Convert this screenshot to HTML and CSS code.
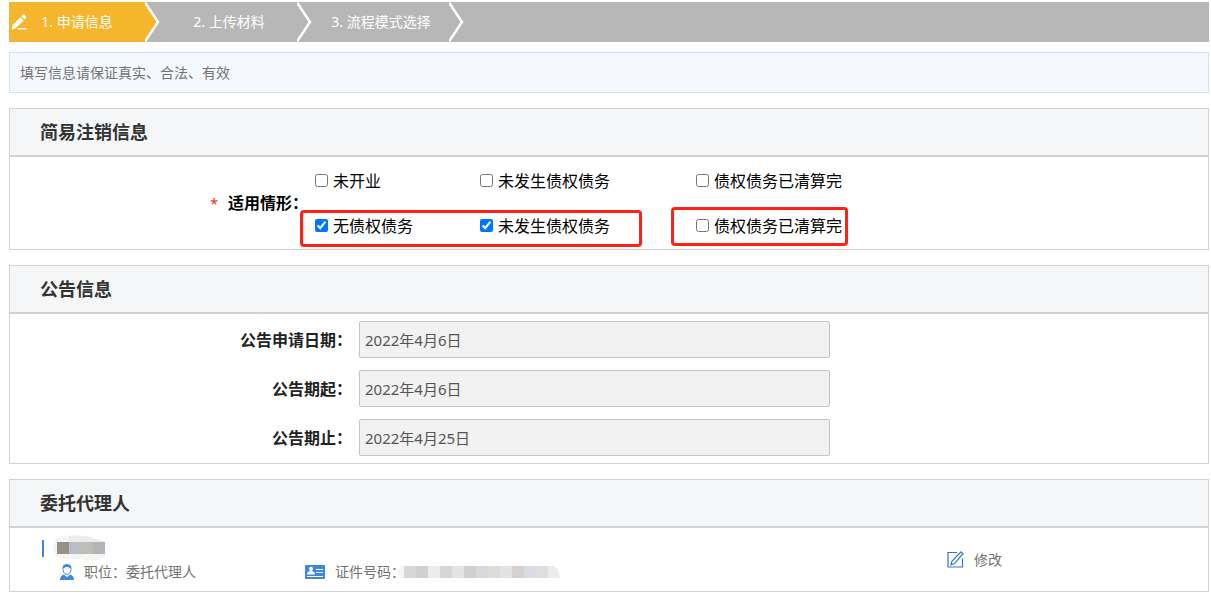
FILE: index.html
```html
<!DOCTYPE html>
<html lang="zh-CN">

<head>
  <meta charset="UTF-8">
  <meta name="viewport" content="width=device-width, initial-scale=1.0">
  <title>简易注销</title>
  <link rel="stylesheet" href="styles.css">
</head>

<body>
  <ol class="steps">
    <li class="step active">
      <svg class="step-icon" width="16" height="16" viewBox="0 0 16 16" fill="#fff">
        <path d="M0.5 15.5l1.2-4.6 7.7-7.7 3.2 3.2-7.9 7.8z" />
        <path d="M10.3 2.3l1.5-1.5q.8-.8 1.700 0l1.500 1.500q.8.8 0 1.600l-1.500 1.500z" />
        <path d="M7.500 14h8v1.600h-9.200z" />
      </svg>
      <span class="step-text">1. 申请信息</span>
      <svg class="step-arrow" width="16" height="40" viewBox="0 0 16 40">
        <path class="step-fill" d="M0 0L13 20L0 40z" />
        <path d="M-1 -1L13 20L-1 41" fill="none" stroke="#fff" stroke-width="2.500" />
      </svg>
    </li>
    <li class="step">
      <span class="step-text">2. 上传材料</span>
      <svg class="step-arrow" width="16" height="40" viewBox="0 0 16 40">
        <path d="M-1 -1L13 20L-1 41" fill="none" stroke="#fff" stroke-width="2.500" />
      </svg>
    </li>
    <li class="step">
      <span class="step-text">3. 流程模式选择</span>
      <svg class="step-arrow" width="16" height="40" viewBox="0 0 16 40">
        <path d="M-1 -1L13 20L-1 41" fill="none" stroke="#fff" stroke-width="2.500" />
      </svg>
    </li>
  </ol>

  <p class="notice">填写信息请保证真实、合法、有效</p>

  <section class="panel">
    <h2 class="panel-title">简易注销信息</h2>
    <div class="case" role="group" aria-labelledby="case-label">
      <div class="case-label"><span class="required">*</span><span id="case-label">适用情形：</span></div>
      <div class="options">
        <label class="option"><input type="checkbox">未开业</label>
        <label class="option"><input type="checkbox">未发生债权债务</label>
        <label class="option"><input type="checkbox">债权债务已清算完</label>
        <label class="option"><input type="checkbox" checked>无债权债务</label>
        <label class="option"><input type="checkbox" checked>未发生债权债务</label>
        <label class="option"><input type="checkbox">债权债务已清算完</label>
        <span class="mark mark-left"></span>
        <span class="mark mark-right"></span>
      </div>
    </div>
  </section>

  <section class="panel">
    <h2 class="panel-title">公告信息</h2>
    <div class="fields">
      <div class="field">
        <label for="applyDate">公告申请日期：</label>
        <input type="text" id="applyDate" value="2022年4月6日" readonly>
      </div>
      <div class="field">
        <label for="startDate">公告期起：</label>
        <input type="text" id="startDate" value="2022年4月6日" readonly>
      </div>
      <div class="field">
        <label for="endDate">公告期止：</label>
        <input type="text" id="endDate" value="2022年4月25日" readonly>
      </div>
    </div>
  </section>

  <section class="panel">
    <h2 class="panel-title">委托代理人</h2>
    <div class="agent">
      <div class="agent-info">
        <div class="agent-name">
          <svg width="54" height="26" viewBox="0 0 54 26">
            <path d="M5 2Q28-2 49 5L53 7V22Q40 28 30 24H8Q0 20 1 10z" fill="#f5f5f5" />
            <path d="M17 1Q33-1 43 4L53 7H17z" fill="#ebebeb" />
            <path d="M5 7h12v12H5z" fill="#979089" />
            <path d="M17 7h12v12H17z" fill="#babdc8" />
            <path d="M29 7h12v12H29z" fill="#bfbdb8" />
            <path d="M41 7h12v12H41z" fill="#b2b4b9" />
          </svg>
        </div>
        <div class="agent-meta">
          <div class="meta">
            <svg width="14" height="16" viewBox="0 0 14 16">
              <path d="M3 5.500q0 3 2.500 4.700h3Q11 8.500 11 5.500" fill="none" stroke="#3f87dd" />
              <path d="M2.500 6Q1.800 0 7 0t4.500 6Q10 3 7 3T2.500 6z" fill="#3f87dd" />
              <path d="M0 16q0-4.500 4-5.500l3 2.800 3-2.800q4 1 4 5.500z" fill="#3f87dd" />
            </svg>
            <span>职位：委托代理人</span>
          </div>
          <div class="meta">
            <svg width="20" height="14" viewBox="0 0 20 14">
              <rect width="20" height="14" rx="1" fill="#3f87dd" />
              <circle cx="6" cy="3.800" r="2" fill="#fff" />
              <path d="M2 9.500q0-3 3-3.500V5h2v1q3 .5 3 3.500z" fill="#fff" />
              <path d="M11 4.500h7M11 7.500h7M2 11.500h16" stroke="#fff" stroke-width="1" />
            </svg>
            <span>证件号码：</span>
            <svg class="mosaic" width="162" height="12" viewBox="0 0 162 12">
              <path d="M3 0H6V12H2Q-2 6 3 0z" fill="#f5f5f5" />
              <path d="M6 0h12v12H6z" fill="#d8d7d5" />
              <path d="M18 0h12v12H18z" fill="#d0d0d0" />
              <path d="M30 0h12v12H30z" fill="#ebecee" />
              <path d="M42 0h12v12H42z" fill="#d6d6d6" />
              <path d="M54 0h12v12H54z" fill="#e3e3e3" />
              <path d="M66 0h12v12H66z" fill="#d0cfcd" />
              <path d="M78 0h12v12H78z" fill="#d5d9dd" />
              <path d="M90 0h12v12H90z" fill="#dcdbda" />
              <path d="M102 0h12v12H102z" fill="#e2e2e2" />
              <path d="M114 0h12v12H114z" fill="#d6d1cf" />
              <path d="M126 0h12v12H126z" fill="#d8dbe3" />
              <path d="M138 0h12v12H138z" fill="#dfdedb" />
              <path d="M150 0h6q5 3 6 12H150z" fill="#ebecee" />
            </svg>
          </div>
        </div>
      </div>
      <a class="edit" href="#">
        <svg width="17" height="17" viewBox="0 0 17 17" fill="none" stroke="#2f74d0" stroke-width="1.200">
          <path d="M10 1.500H1V16h14.500V7.500" />
          <path d="M14 .9l2 1.800L7.500 12.600l-3.500 1.200 .9-3.400z" />
        </svg>
        <span>修改</span>
      </a>
    </div>
  </section>
</body>

</html>
```
FILE: styles.css
```css
* {
  box-sizing: border-box;
  margin: 0;
  padding: 0;
}
body {
  padding: 2px 2px 5px 9px;
  background: #fff;
  color: #000;
  font-family: "Noto Sans", "Noto Sans CJK SC", sans-serif;
  font-size: 16px;
  line-height: 24px;
}
svg {
  display: block;
  flex: none;
}

/* steps */
.steps {
  display: flex;
  height: 40px;
  background: #b7b7b7;
  list-style: none;
}
.step {
  display: flex;
  position: relative;
  width: 152px;
  color: #fff;
  font-size: 14px;
  line-height: 40px;
}
.step-text {
  flex: 1;
  text-align: center;
  white-space: nowrap;
}
.active .step-text {
  background: #f5b62e;
}
.step-fill {
  fill: #f5b62e;
}
.step-icon {
  position: absolute;
  left: 2px;
  top: 12px;
}

.notice {
  margin-top: 10px;
  padding: 8px 10px;
  border: 1px solid #d0e3f7;
  background: #f5f8ff;
  color: #737373;
  font-size: 14px;
  line-height: 23px;
}

/* panels */
.panel {
  margin-top: 15px;
  border: 1px solid #d2d2d2;
}
.panel-title {
  padding: 0 30px;
  border-bottom: 2px solid #d2d2d2;
  background: #f5f6f8;
  color: #333;
  font-size: 18px;
  line-height: 46px;
}

.case {
  display: flex;
  align-items: center;
  padding: 1px 0;
}
.case-label {
  width: 298px;
  font-weight: bold;
  text-align: right;
}
.required {
  margin-right: 10px;
  color: #f12a1c;
  font-size: 14px;
  font-weight: normal;
}
.options {
  display: grid;
  position: relative;
  grid-template-columns: 165px 216px auto;
  grid-auto-rows: 45px;
  margin-left: 7px;
}
.option {
  display: flex;
  align-items: center;
  gap: 5px;
  white-space: nowrap;
}
.option input {
  width: 13px;
  height: 13px;
}
/* red frames over the second row */
.mark {
  position: absolute;
  border: 3px solid #fd2116;
  border-radius: 4px;
  pointer-events: none;
}
.mark-left {
  left: -15px;
  top: 52px;
  width: 342px;
  height: 37px;
}
.mark-right {
  left: 356px;
  top: 49px;
  width: 177px;
  height: 39px;
}

.fields {
  display: grid;
  gap: 12px;
  padding: 7px 0;
}
.field {
  display: flex;
  align-items: center;
  gap: 7px;
}
.field label {
  width: 342px;
  color: #222;
  font-weight: bold;
  text-align: right;
}
.field input {
  flex: 1;
  max-width: 471px;
  height: 37px;
  padding: 0 5px;
  border: 1px solid #c2c5c9;
  border-radius: 2px;
  background: #f2f2f2;
  color: #555;
  font-family: inherit;
  font-size: 15px;
}

/* agent */
.agent {
  display: flex;
  align-items: center;
  padding: 7px 206px 7px 32px;
  color: #737373;
  font-size: 14px;
}
.agent-info {
  flex: 1;
}
.agent-name {
  display: flex;
  align-items: center;
  gap: 8px;
  height: 26px;
}
.agent-name::before {
  width: 2px;
  height: 17px;
  background: #3f87dd;
  content: "";
}
.agent-meta {
  display: grid;
  grid-template-columns: 245px auto;
  padding: 0 0 2px 18px;
  line-height: 21px;
}
.meta {
  display: flex;
  align-items: center;
  gap: 10px;
}
.mosaic {
  margin-left: -17px;
}
.edit {
  display: flex;
  align-items: center;
  gap: 10px;
  color: #737373;
  text-decoration: none;
}
```
